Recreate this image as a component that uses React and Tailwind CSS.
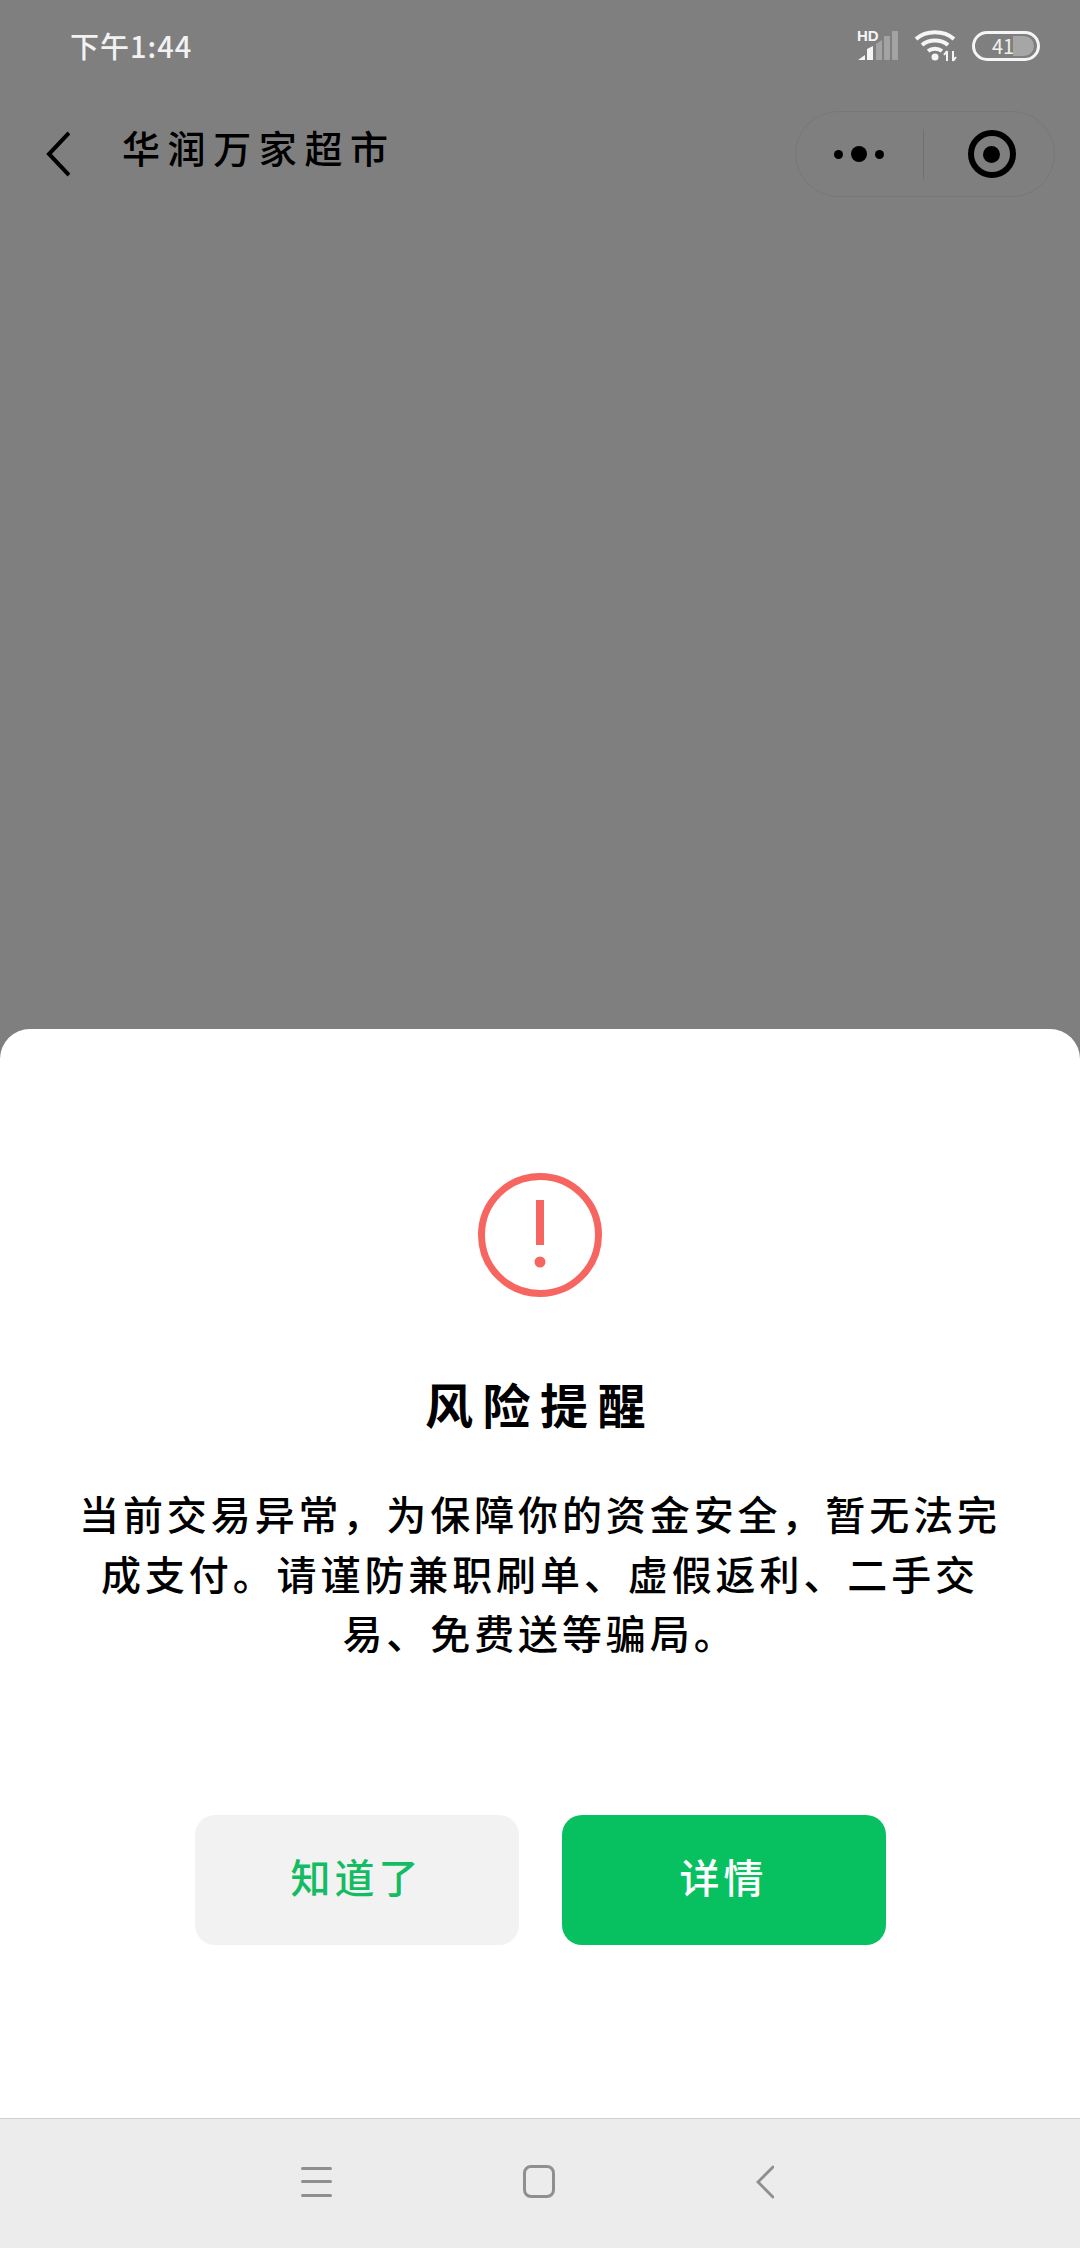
import React from 'react'

const CJK = { fontFamily: '"Noto Sans CJK SC", "Noto Sans", sans-serif' }

function SignalIcon() {
  return (
    <div className="relative h-[32px] w-[42px]">
      <span className="absolute top-[-1px] left-0 text-[15px] leading-[14px] font-bold text-[#f5f5f5]" style={{ fontFamily: '"Liberation Sans", sans-serif' }}>HD</span>
      <svg width="42" height="32" viewBox="0 0 42 32" fill="none">
        <path d="M1 30 L8 25 V30 Z" fill="#f5f5f5" />
        <path d="M10 30 V19 L16 16 V30 Z" fill="#f5f5f5" />
        <path d="M19 30 V14 L25 10 V30 Z" fill="#a3a3a3" />
        <rect x="27" y="6" width="6" height="24" rx="1" fill="#a3a3a3" />
        <rect x="35" y="1" width="6" height="29" rx="1" fill="#a3a3a3" />
      </svg>
    </div>
  )
}

function WifiIcon() {
  return (
    <svg width="44" height="32" viewBox="0 0 44 32" fill="none" stroke="#f5f5f5" strokeWidth="4">
      <path d="M2 9 C12 0 30 0 40 9" />
      <path d="M8 15 C15 9 27 9 34 15" />
      <path d="M14 21 C18 18 24 18 28 21" />
      <circle cx="21" cy="27" r="3.5" fill="#f5f5f5" stroke="none" />
      <path d="M33 21 V31 M33 21 L30 25 M39 21 V31 M39 31 L42 27" strokeWidth="2" />
    </svg>
  )
}

function Battery() {
  return (
    <div className="relative flex h-[30px] w-[68px] items-center overflow-hidden rounded-full border-[3px] border-[#f5f5f5] pl-[17px]">
      <div className="absolute top-[2px] right-[3px] bottom-[2px] left-[38px] rounded-r-full bg-[#a6a6a6]" />
      <span className="relative text-[20px] leading-none text-[#f0f0f0]" style={CJK}>41</span>
    </div>
  )
}

function AlertIcon() {
  return (
    <svg width="126" height="126" viewBox="0 0 126 126" fill="none">
      <circle cx="63" cy="63" r="58.5" stroke="#f76560" strokeWidth="7" />
      <rect x="59" y="28" width="8" height="45" fill="#f76560" />
      <circle cx="63" cy="90" r="5.5" fill="#f76560" />
    </svg>
  )
}

export default function App() {
  return (
    <div className="flex h-[2248px] w-[1080px] flex-col overflow-hidden bg-[#7f7f7f]" style={CJK}>
      {/* Status bar */}
      <div className="flex h-[92px] items-center justify-between pr-[40px] pl-[70px]">
        <span className="mb-[2px] text-[29px] leading-none font-medium tracking-[1px] text-[#f2f2f2]">下午1:44</span>
        <div className="flex items-center">
          <SignalIcon />
          <div className="mr-[14px] ml-[15px]"><WifiIcon /></div>
          <Battery />
        </div>
      </div>

      {/* Title bar */}
      <div className="flex h-[124px] items-center justify-between pr-[25px] pl-[46px]">
        <div className="flex items-center">
          <svg width="24" height="46" viewBox="0 0 24 46" fill="none" stroke="#000" strokeWidth="4">
            <path d="M23 2 L3 23 L23 44" />
          </svg>
          <span className="mb-[14px] ml-[52px] text-[38px] leading-none font-medium tracking-[7.6px] text-black">华润万家超市</span>
        </div>
        <div className="flex h-[86px] w-[260px] items-center rounded-full border border-[#777777]">
          <div className="flex flex-1 items-center justify-center gap-[8px] pr-[2px]">
            <span className="h-[9px] w-[9px] rounded-full bg-black" />
            <span className="h-[16px] w-[16px] rounded-full bg-black" />
            <span className="h-[9px] w-[9px] rounded-full bg-black" />
          </div>
          <div className="h-[50px] w-px bg-[#707070]" />
          <div className="flex flex-1 items-center justify-center pl-[5px]">
            <div className="flex h-[48px] w-[48px] items-center justify-center rounded-full border-[6px] border-black">
              <span className="h-[17px] w-[17px] rounded-full bg-black" />
            </div>
          </div>
        </div>
      </div>

      <div className="flex-1" />

      {/* Risk sheet */}
      <div className="flex h-[1089px] flex-col items-center rounded-t-[30px] bg-white pt-[143px]">
        <AlertIcon />
        <h1 className="mt-[73px] h-[64px] text-[48px] leading-[64px] font-bold tracking-[9.5px] text-black">风险提醒</h1>
        <p className="mt-[49px] w-[960px] text-center text-[40px] leading-[59.5px] font-medium tracking-[3.9px] text-black">
          当前交易异常，为保障你的资金安全，暂无法完成支付。请谨防兼职刷单、虚假返利、二手交易、免费送等骗局。
        </p>
        <div className="mt-[152px] flex gap-[43px]">
          <button className="h-[130px] w-[324px] rounded-[20px] bg-[#f2f2f2] pb-[8px] text-[40px] font-medium tracking-[4px] text-[#13bb63]">知道了</button>
          <button className="h-[130px] w-[324px] rounded-[20px] bg-[#07c160] pb-[8px] text-[40px] font-medium tracking-[4px] text-white">详情</button>
        </div>
      </div>

      {/* Navigation bar */}
      <div className="flex h-[130px] items-center border-t border-[#cfcfcf] bg-[#ececec] pb-[4px] pl-[301px]">
        <div className="flex h-[30px] w-[31px] flex-col justify-between">
          <span className="h-[3px] rounded-full bg-[#8f8f8f]" />
          <span className="h-[3px] rounded-full bg-[#8f8f8f]" />
          <span className="h-[3px] rounded-full bg-[#8f8f8f]" />
        </div>
        <div className="ml-[191px] h-[33px] w-[32px] rounded-[8px] border-[3px] border-[#8f8f8f]" />
        <svg className="ml-[201px]" width="18" height="34" viewBox="0 0 18 34" fill="none" stroke="#8f8f8f" strokeWidth="3" strokeLinecap="round">
          <path d="M17 2 L2 17 L17 32" />
        </svg>
      </div>
    </div>
  )
}
